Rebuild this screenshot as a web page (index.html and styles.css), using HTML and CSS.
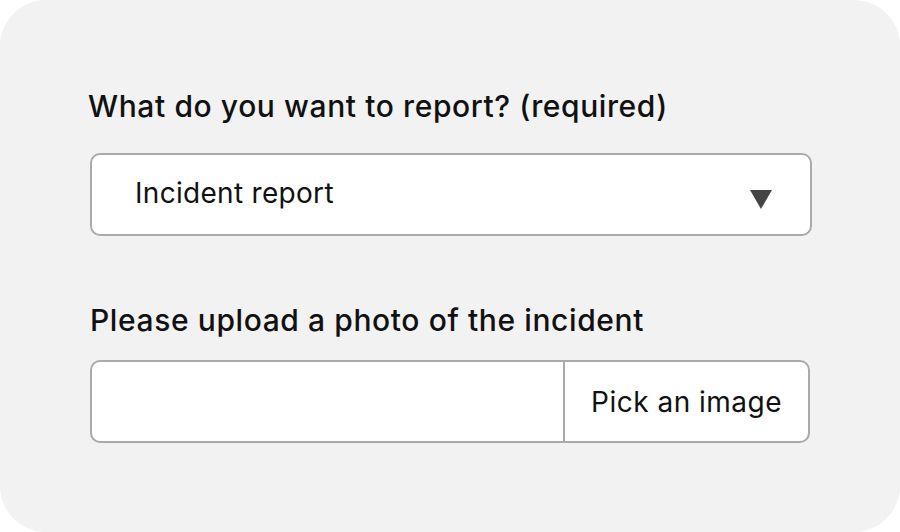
FILE: index.html
```html
<!DOCTYPE html>
<html lang="en">
<head>
    <meta charset="UTF-8">
    <title>Report an incident</title>
    <link rel="stylesheet" href="styles.css">
</head>
<body>
    <div class="card">
        <div class="field">
            <label class="label first">What do you want to report? (required)</label>
            <div class="select">
                <span class="select-value">Incident report</span>
                <svg class="caret" width="22" height="19" viewBox="0 0 22 19"><polygon points="0,0 22,0 11,19" fill="#444"/></svg>
            </div>
        </div>
        <div class="field second">
            <label class="label">Please upload a photo of the incident</label>
            <div class="upload">
                <div class="upload-name"></div>
                <div class="upload-btn">Pick an image</div>
            </div>
        </div>
    </div>
</body>
</html>
```

FILE: styles.css
```css
body {
    margin: 0;
    padding: 0;
    background-color: #ffffff;
    font-family: Inter, "Noto Sans", sans-serif;
    color: #111;
}
.card {
    width: 900px;
    height: 532px;
    box-sizing: border-box;
    background-color: #f2f2f2;
    border-radius: 46px;
    padding: 88px 88px 0 90px;
}
.field {
    display: flex;
    flex-direction: column;
}
.field.second {
    margin-top: 66px;
}
.label {
    font-size: 30px;
    line-height: 36px;
    font-weight: 500;
    letter-spacing: 0.6px;
    margin-bottom: 22px;
}
.label.first {
    margin-left: -2px;
    margin-bottom: 29px;
}
.select {
    height: 83px;
    box-sizing: border-box;
    border: 2px solid #aaa;
    border-radius: 10px;
    background: white;
    display: flex;
    align-items: center;
    justify-content: space-between;
    padding: 0 38px 0 43px;
    width: 722px;
}
.select-value {
    font-size: 28px;
    letter-spacing: 0.3px;
    margin-top: -3px;
}
.caret {
    margin-top: 9px;
}
.upload {
    height: 83px;
    width: 720px;
    box-sizing: border-box;
    border: 2px solid #aaa;
    border-radius: 10px;
    background: white;
    display: flex;
}
.upload-name {
    flex: 1;
    border-right: 2px solid #aaa;
}
.upload-btn {
    width: 243px;
    box-sizing: border-box;
    font-size: 28px;
    letter-spacing: 0.5px;
    display: flex;
    align-items: center;
    padding-left: 26px;
}
```
